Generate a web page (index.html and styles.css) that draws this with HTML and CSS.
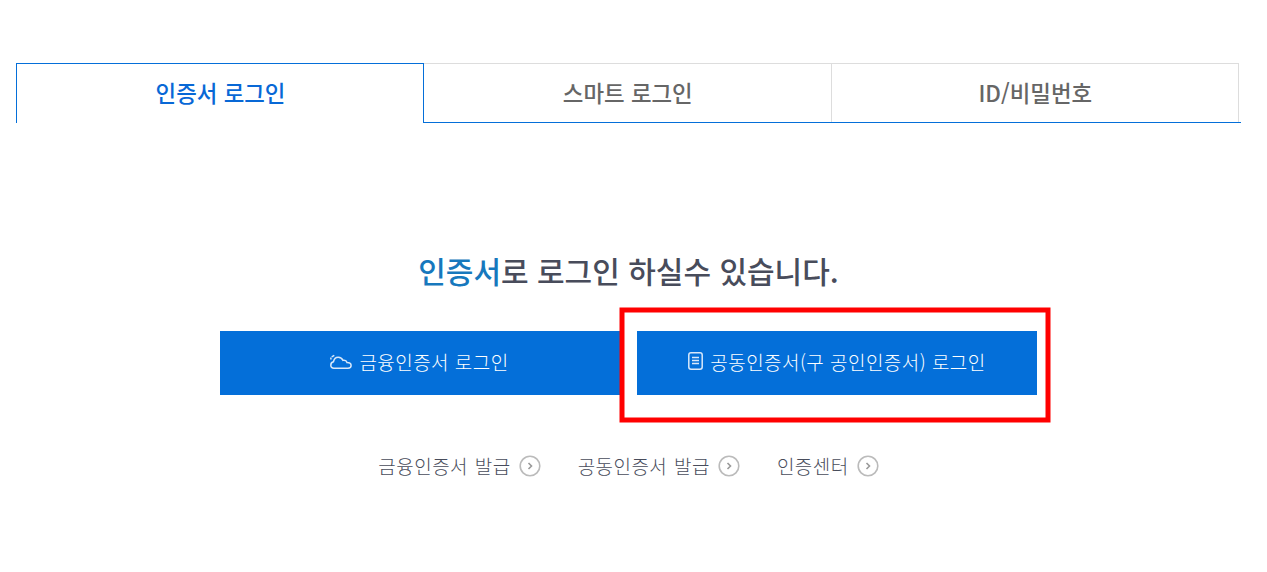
FILE: index.html
```html
<!DOCTYPE html>
<html lang="ko">
<head>
    <meta charset="UTF-8">
    <meta name="viewport" content="width=device-width, initial-scale=1.0">
    <title>인증서 로그인</title>
    <link rel="stylesheet" href="styles.css">
</head>
<body>
    <ul class="tabs">
        <li class="tab active"><a>인증서 로그인</a></li>
        <li class="tab"><a>스마트 로그인</a></li>
        <li class="tab"><a>ID/비밀번호</a></li>
    </ul>

    <div class="login">
        <h1><span class="point">인증서</span>로 로그인 하실수 있습니다.</h1>

        <div class="buttons">
            <a class="btn">
                <svg class="cloud" width="22" height="16" viewBox="0 0 22 16">
                    <path d="M4 14.2C1.900 14.200.8 13 .8 11.200c0-1.900 1.100-3.200 2.700-3.500C4 4.900 5.700 3.200 8.200 3.200c2.300 0 3.900 1.100 4.700 3.100 2-.5 3.700.4 4.100 2.300 2.300 0 4.100 1.200 4.100 3 0 1.700-1.300 2.600-3.100 2.600z"/>
                    <path d="M.9 5.500V3.500M1.700 2.800L4.300 1.300"/>
                </svg>
                <span>금융인증서 로그인</span>
            </a>
            <a class="btn">
                <svg class="doc" width="15" height="18" viewBox="0 0 15 18">
                    <rect x=".8" y=".8" width="13.400" height="16.400" rx="2.200"/>
                    <path d="M4 5.500h7M4 8.500h7M4 11.500h7"/>
                </svg>
                <span>공동인증서(구 공인인증서) 로그인</span>
                <svg class="frame" width="432" height="116"><rect x="3" y="3" width="426" height="110"/></svg>
            </a>
        </div>

        <div class="links">
            <a class="link"><span>금융인증서 발급</span>
                <svg width="22" height="22" viewBox="0 0 22 22"><circle cx="11" cy="11" r="9.800"/><path d="M9.500 8l3 3-3 3"/></svg>
            </a>
            <a class="link"><span>공동인증서 발급</span>
                <svg width="22" height="22" viewBox="0 0 22 22"><circle cx="11" cy="11" r="9.800"/><path d="M9.500 8l3 3-3 3"/></svg>
            </a>
            <a class="link"><span>인증센터</span>
                <svg width="22" height="22" viewBox="0 0 22 22"><circle cx="11" cy="11" r="9.800"/><path d="M9.500 8l3 3-3 3"/></svg>
            </a>
        </div>
    </div>
</body>
</html>
```
FILE: styles.css
```css
* {
    box-sizing: border-box;
}
body {
    margin: 0;
    padding: 63px 26px 0 16px;
    background: #fff;
    font-family: "Noto Sans CJK KR", sans-serif;
}
.tabs {
    display: flex;
    height: 59px;
    margin: 0;
    padding: 0;
    list-style: none;
}
.tabs::after {
    content: "";
    width: 2px;
    box-shadow: 0 1px 0 #046fd9;
}
.tab {
    flex: 1;
    border-top: 1px solid #ddd;
    border-right: 1px solid #ddd;
    box-shadow: 0 1px 0 #046fd9;
    color: #666;
    font-size: 22.400px;
    font-weight: 500;
    line-height: 57px;
    text-align: center;
    text-indent: 1px;
    white-space: nowrap;
}
.tab.active {
    flex: 0 0 408px;
    height: 60px;
    border: 1px solid #046fd9;
    border-bottom: 0;
    box-shadow: none;
    color: #0868d6;
}
.login {
    width: 817px;
    margin: 0 0 0 204px;
}
h1 {
    margin: 125px 0 0;
    color: #484c5b;
    font-size: 30px;
    font-weight: 500;
    line-height: 46px;
    text-align: center;
    white-space: nowrap;
}
.point {
    color: #1778bd;
}
.buttons {
    display: flex;
    gap: 17px;
    margin-top: 38px;
}
.btn {
    position: relative;
    display: flex;
    flex: 1;
    align-items: center;
    justify-content: center;
    gap: 7px;
    height: 64px;
    padding-bottom: 2px;
    background: #046fd9;
    color: #fff;
}
.btn, .link {
    font-size: 19px;
    font-weight: 300;
    letter-spacing: 0.45px;
    line-height: 28px;
    white-space: nowrap;
}
.cloud, .doc {
    fill: none;
    stroke: #d9e8fa;
    stroke-width: 1.5px;
}
.cloud {
    margin-left: -1px;
}
.doc {
    margin-bottom: 2px;
}
.frame {
    position: absolute;
    top: -24px;
    left: -18px;
    fill: none;
    stroke: #f00;
    stroke-width: 5px;
}
.links {
    display: flex;
    justify-content: center;
    gap: 37px;
    margin-top: 57px;
    color: #484c5b;
}
.link {
    display: flex;
    align-items: center;
    gap: 8px;
    word-spacing: 1px;
}
.link svg {
    margin-bottom: 1px;
    fill: none;
    stroke: #bbb;
    stroke-width: 1.6px;
}
.link path {
    stroke: #999;
}
```
